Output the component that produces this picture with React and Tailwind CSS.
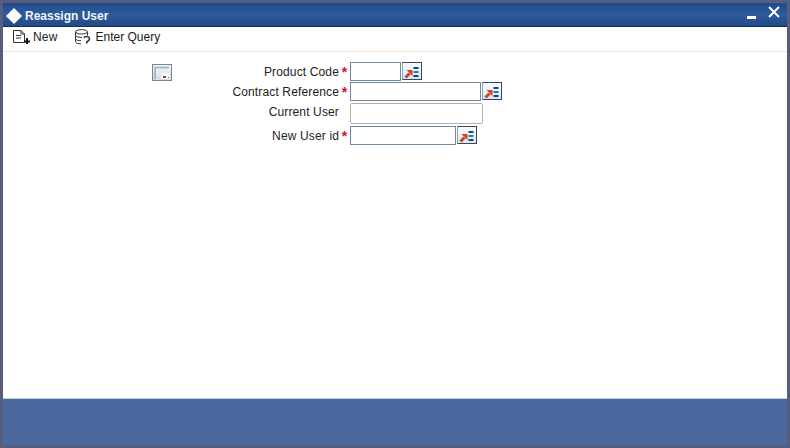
const LovIcon = () => (
  <button className="w-[20px] h-[18px] border border-[#33485c] border-l-[#8ea3b5] bg-gradient-to-b from-[#fbfdff] to-[#d8e6f4] shrink-0 ml-[1px] p-0 block self-start">
    <svg width="18" height="16" viewBox="0 0 18 16" className="block">
      <path d="M2.5 14.5 L6.5 10.5" stroke="#d2401c" strokeWidth="3" />
      <path d="M3.5 7 H9.5 V13 Z" fill="#d2401c" />
      <rect x="10.5" y="4" width="5" height="2" fill="#15466f" />
      <rect x="10.5" y="8" width="5" height="2" fill="#2f78ab" />
      <rect x="10.5" y="12" width="5" height="2" fill="#15466f" />
    </svg>
  </button>
);

const Row = ({ label, star, inputClass, lov, rowClass, labelClass = "" }) => (
  <div className={`flex items-center ${rowClass}`}>
    <span className={`w-[167px] text-right text-[12px] tracking-[0.14px] text-[#222] ${labelClass}`}>{label}</span>
    <span className="w-[11px] text-center text-[#c8161d] text-[14px] leading-none font-bold">{star ? "*" : ""}</span>
    <div className={inputClass} />
    {lov ? <LovIcon /> : null}
  </div>
);

export default function App() {
  return (
    <div className="w-[790px] h-[448px] bg-[#575d7d] p-[3px] flex flex-col font-['Liberation_Sans',Arial,sans-serif] overflow-hidden">
      <div className="h-[24px] shrink-0 bg-gradient-to-b from-[#1f4a8a] via-[#2f5a9c] to-[#214a86] border-b border-[#16305e] flex items-center pl-[3px] pr-[4px] text-white">
        <svg width="16" height="18" viewBox="0 0 16 18" className="shrink-0 mt-[2px]">
          <path d="M8 1 L16 9 L8 17 L0 9 Z" fill="#ffffff" />
        </svg>
        <span className="ml-[3px] mt-[3px] text-[12px] font-bold text-[#eef2f8]">Reassign User</span>
        <div className="ml-auto flex items-center">
          <div className="w-[9px] h-[3px] bg-white mt-[6px]" />
          <svg width="14" height="14" viewBox="0 0 14 14" className="ml-[11px] mb-[6px] mr-[2px]">
            <path d="M2 2 L12 12 M12 2 L2 12" stroke="#fff" strokeWidth="2" />
          </svg>
        </div>
      </div>
      <div className="h-[25px] shrink-0 bg-white border-b border-[#e4e4e4] flex items-start pt-[1px] text-[12px] text-[#1a1a1a]">
        <div className="flex items-center ml-[10px] h-[18px]">
          <svg width="18" height="16" viewBox="0 0 18 16" fill="none" stroke="#333" strokeWidth="1">
            <path d="M0.5 1.5 H8 L11.5 5 V13.5 H0.5 Z M8 1.5 V5 H11.5" />
            <path d="M3 6.5 H8 M3 9 H8" />
            <path d="M14 9 V15 M11 12.5 H17" stroke="#111" strokeWidth="2" />
          </svg>
          <span className="ml-[2px] tracking-[0.15px]">New</span>
        </div>
        <div className="flex items-center ml-[17px] h-[18px]">
          <svg width="18" height="16" viewBox="0 0 18 16" fill="none" stroke="#333" strokeWidth="1">
            <ellipse cx="7.5" cy="2.8" rx="6" ry="2.2" />
            <path d="M1.5 3 V12.5 C1.5 14 4 14.8 7 14.8 M13.5 3 V6.5 M1.5 6.5 C2.5 8 5 8.5 8 8.3 M1.5 10 C2.5 11.3 4.5 11.8 7 11.6" />
            <path d="M10 9 C11 7 15 7 15.5 9.5 C15.8 11.5 13.5 12 12.8 13 V14.5" strokeWidth="1.6" />
          </svg>
          <span className="ml-[3px]">Enter Query</span>
        </div>
      </div>
      <div className="flex-1 bg-white flex items-start pt-[10px]">
        <svg width="20" height="17" viewBox="0 0 20 17" className="ml-[149px] mt-[2px] shrink-0">
          <defs>
            <linearGradient id="g" x1="0" y1="0" x2="0" y2="1">
              <stop offset="0" stopColor="#f6f8fa" />
              <stop offset="1" stopColor="#cfdbe6" />
            </linearGradient>
          </defs>
          <rect x="0.5" y="0.5" width="19" height="16" fill="url(#g)" stroke="#6f8799" />
          <path d="M3 15 V3.5 H17" fill="none" stroke="#aeb6be" strokeWidth="2" />
          <rect x="9" y="9" width="9" height="6" fill="#f8f8f8" />
          <rect x="11" y="12" width="3" height="2" fill="#c03020" />
          <rect x="16" y="13" width="1" height="1" fill="#555" />
        </svg>
        <div className="flex flex-col">
          <Row label="Product Code" star lov rowClass="h-[19px]" inputClass="w-[51px] h-[19px] border border-[#6f8a9e] bg-white shrink-0" />
          <Row label="Contract Reference" star lov rowClass="h-[19px] mt-[1px]" labelClass="mt-[1px]" inputClass="w-[131px] h-[19px] border border-[#6f8a9e] bg-white shrink-0" />
          <Row label="Current User" rowClass="h-[21px] mt-[2px]" labelClass="mt-[-4px]" inputClass="w-[133px] h-[21px] border border-[#b3b3b3] rounded-[2px] bg-white shrink-0" />
          <Row label="New User id" star lov rowClass="h-[19px] mt-[2px]" inputClass="w-[106px] h-[19px] border border-[#6f8a9e] bg-white shrink-0" />
        </div>
      </div>
      <div className="h-[47px] shrink-0 bg-[#4a6a9f] border-t border-[#b9d3e6]" />
    </div>
  );
}
